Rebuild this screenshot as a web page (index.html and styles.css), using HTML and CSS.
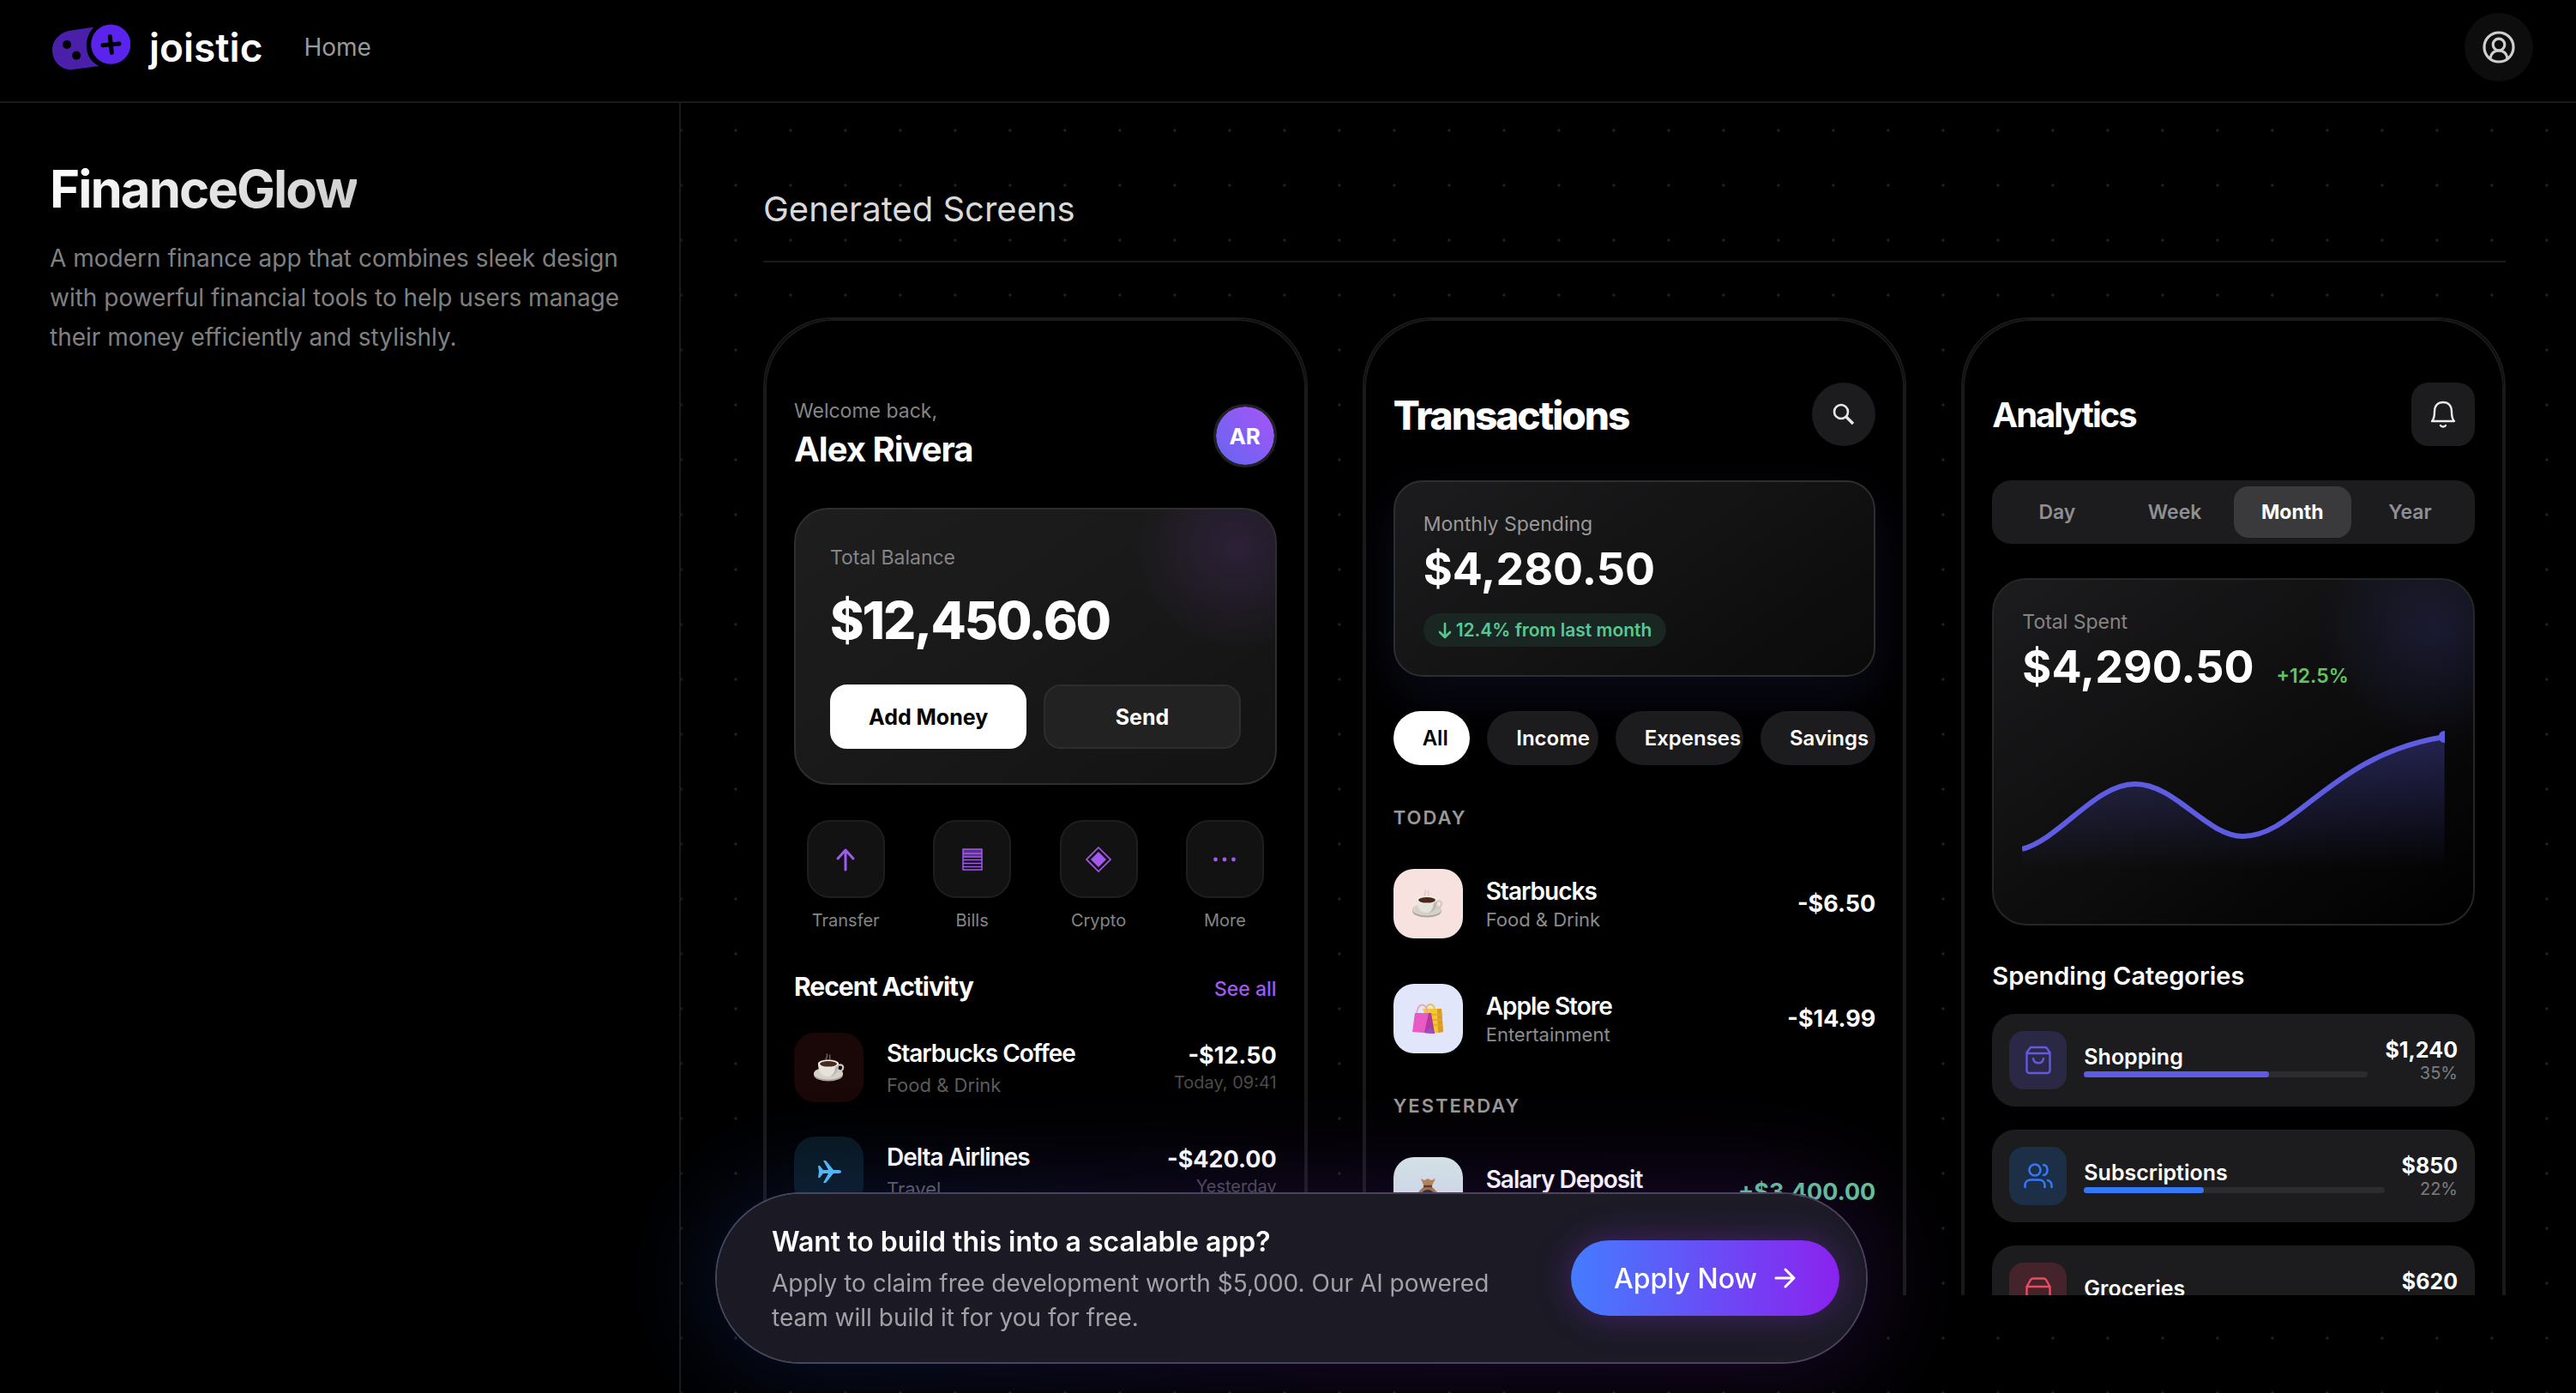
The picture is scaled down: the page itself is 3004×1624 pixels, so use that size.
FILE: index.html
```html
<!DOCTYPE html>
<html lang="en">
<head>
  <meta charset="UTF-8" />
  <meta name="viewport" content="width=device-width, initial-scale=1.0"/>
  <title>FinanceGlow - joistic</title>
  <link rel="stylesheet" href="styles.css">
</head>
<body>
  <svg class="sprite" aria-hidden="true">
    <symbol id="coffee" viewBox="0 0 36 36">
      <path d="M15 9c-3-3 3-4 0-7M18 9c3-3-1-4 1-6" fill="none" stroke="#b9b3b0" stroke-opacity=".5" stroke-width="1.4" stroke-linecap="round"/>
      <ellipse cx="17" cy="26" rx="17" ry="7.5" fill="#a9a59c"/>
      <ellipse cx="17" cy="24.500" rx="17" ry="7" fill="#d5d1c8"/>
      <path d="M28 15c8-3 9 7-1 8" fill="none" stroke="#cfcbc3" stroke-width="2.200"/>
      <path d="M5 13c0 9 4 15 12 15s12-6 12-15z" fill="#e6e3dd"/>
      <path d="M19 28c7-1 10-7 10-14l-4 1c0 6-2 11-6 13z" fill="#bdb9b1"/>
      <ellipse cx="17" cy="13" rx="12" ry="4.500" fill="#f3f1ed"/>
      <ellipse cx="17" cy="13.300" rx="10" ry="3.300" fill="#4a2a1c"/>
    </symbol>
  </svg>
  <header class="topbar">
    <a class="brand" href="#">
      <svg class="logo" viewBox="33 28 272 160" aria-hidden="true">
        <path d="M178 38 98 50C60 56 33 84 33 118c0 42 33 72 71 68l92-12C144 148 138 80 178 38z" fill="#4a20ab"/>
        <circle cx="84" cy="99" r="15" fill="#000"/>
        <circle cx="117" cy="137" r="15" fill="#000"/>
        <circle cx="237" cy="98" r="69" fill="#5b23ee"/>
        <path d="M234 71l6 56M209 101l57-5" stroke="#000" stroke-width="15" stroke-linecap="round"/>
      </svg>
      <span class="brand-name">joistic</span>
    </a>
    <nav><a class="nav-link" href="#">Home</a></nav>
    <button class="profile" type="button" aria-label="Profile">
      <svg viewBox="0 0 38 38" fill="none" stroke="#cfcfcf" stroke-width="3.200">
        <circle cx="19" cy="19" r="17"/>
        <circle cx="19" cy="16" r="6.800"/>
        <path d="M9 32c1-6 5-9 10-9s9 3 10 9"/>
      </svg>
    </button>
  </header>

  <div class="layout">
    <aside class="sidebar">
      <h1>FinanceGlow</h1>
      <p>A modern finance app that combines sleek design with powerful financial tools to help users manage their money efficiently and stylishly.</p>
    </aside>

    <main class="content">
      <h2 class="section-title">Generated Screens</h2>
      <div class="screens">

        <!-- home -->
        <section class="phone">
          <div class="screen screen-home">
            <div class="welcome">
              <div>
                <div class="label">Welcome back,</div>
                <div class="user-name">Alex Rivera</div>
              </div>
              <div class="avatar">AR</div>
            </div>
            <div class="balance-card">
              <div class="label">Total Balance</div>
              <div class="balance">$12,450.60</div>
              <div class="card-buttons">
                <button class="btn btn-light" type="button">Add Money</button>
                <button class="btn btn-dark" type="button">Send</button>
              </div>
            </div>
            <div class="actions">
              <button class="action" type="button">
                <span class="action-icon">
                  <svg width="30" height="30" viewBox="0 0 30 30" fill="none" stroke="#a259ef" stroke-width="3" stroke-linecap="round" stroke-linejoin="round"><path d="M15 27V4M6 14l9-10 9 10"/></svg>
                </span>
                Transfer
              </button>
              <button class="action" type="button">
                <span class="action-icon">
                  <svg width="30" height="30" viewBox="0 0 30 30" fill="none" stroke="#a259ef" stroke-width="1.500"><path d="M4 3h22v9H4z" fill="#5a3384" stroke="none"/><path d="M4 3h22v24H4zM4 8h22M4 12h22M4 15.500h22M4 19.500h22M4 23.500h22"/></svg>
                </span>
                Bills
              </button>
              <button class="action" type="button">
                <span class="action-icon">
                  <svg width="30" height="30" viewBox="0 0 30 30"><path d="M15 1l14 14-14 14L1 15z" fill="none" stroke="#a259ef" stroke-width="1.600"/><path d="M15 6l9 9-9 9-9-9z" fill="#a259ef"/></svg>
                </span>
                Crypto
              </button>
              <button class="action" type="button">
                <span class="action-icon">
                  <svg width="30" height="30" viewBox="0 0 30 30" fill="#a259ef"><circle cx="4.500" cy="15" r="2.400"/><circle cx="15" cy="15" r="2.400"/><circle cx="25.500" cy="15" r="2.400"/></svg>
                </span>
                More
              </button>
            </div>
            <div class="list-head">
              <h3>Recent Activity</h3>
              <a href="#">See all</a>
            </div>
            <ul class="rows">
              <li class="row">
                <span class="row-icon icon-coffee"><svg width="36" height="36"><use href="#coffee"/></svg></span>
                <div class="row-text">
                  <div class="row-title">Starbucks Coffee</div>
                  <div class="row-sub">Food &amp; Drink</div>
                </div>
                <div class="row-side">
                  <div class="amount">-$12.50</div>
                  <div class="time">Today, 09:41</div>
                </div>
              </li>
              <li class="row">
                <span class="row-icon icon-plane">
                  <svg width="28" height="26" viewBox="0 0 28 26" fill="#55bdf5"><path d="M1 6h2l4 5h6L7 0h3l9 11h6c4 0 4 4 0 4h-6l-9 11H7l6-11H7l-4 5H1l1-7z"/></svg>
                </span>
                <div class="row-text">
                  <div class="row-title">Delta Airlines</div>
                  <div class="row-sub">Travel</div>
                </div>
                <div class="row-side">
                  <div class="amount">-$420.00</div>
                  <div class="time">Yesterday</div>
                </div>
              </li>
            </ul>
          </div>
        </section>

        <!-- transactions -->
        <section class="phone">
          <div class="screen screen-transactions">
            <div class="screen-head">
              <h3 class="screen-title">Transactions</h3>
              <button class="icon-btn round" type="button" aria-label="Search">
                <svg width="28" height="28" viewBox="0 0 28 28" fill="none" stroke="#e8e8e8"><circle cx="11" cy="11" r="8" stroke-width="2.600"/><path d="M17 17l8 8" stroke-width="3.400"/></svg>
              </button>
            </div>
            <div class="spending-card">
              <div class="label">Monthly Spending</div>
              <div class="total">$4,280.50</div>
              <div class="badge">
                <svg width="16" height="20" viewBox="0 0 16 20" fill="none" stroke="#58c893" stroke-width="2.600" stroke-linecap="round" stroke-linejoin="round"><path d="M8 2v16M2 12l6 6 6-6"/></svg>
                12.4% from last month
              </div>
            </div>
            <div class="chips">
              <button class="chip active" type="button">All</button>
              <button class="chip" type="button">Income</button>
              <button class="chip" type="button">Expenses</button>
              <button class="chip" type="button">Savings</button>
            </div>
            <h4 class="day">Today</h4>
            <ul class="rows">
              <li class="row">
                <span class="row-icon icon-pink"><svg width="36" height="36"><use href="#coffee"/></svg></span>
                <div class="row-text">
                  <div class="row-title">Starbucks</div>
                  <div class="row-sub">Food &amp; Drink</div>
                </div>
                <div class="amount">-$6.50</div>
              </li>
              <li class="row">
                <span class="row-icon icon-lilac">
                  <svg width="38" height="38" viewBox="0 0 38 38">
                    <path d="M17 8c1-8 9-8 10 0" fill="none" stroke="#e8c33c" stroke-width="1.800"/>
                    <path d="M13 7h22l2 27-12 2z" fill="#f2c732"/>
                    <path d="M30 7h5l2 27-6 1z" fill="#d99a26"/>
                    <path d="M22 14h14M23 20h13M24 26h12" stroke="#e3a72a" stroke-width="1.500"/>
                    <path d="M6 13c1-14 12-14 13 0" fill="none" stroke="#e9a3cf" stroke-width="1.800"/>
                    <path d="M4 12h18l5 24-26-2z" fill="#ea5ac4"/>
                    <path d="M20 12h3l4 24-12-1z" fill="#b23a9c"/>
                    <path d="M22 28l5 8-12-1z" fill="#9050c8"/>
                  </svg>
                </span>
                <div class="row-text">
                  <div class="row-title">Apple Store</div>
                  <div class="row-sub">Entertainment</div>
                </div>
                <div class="amount">-$14.99</div>
              </li>
            </ul>
            <h4 class="day">Yesterday</h4>
            <ul class="rows">
              <li class="row">
                <span class="row-icon icon-mint">
                  <svg width="34" height="36" viewBox="0 0 34 36">
                    <path d="M9 2l4 2 4-2 4 2 5-2-5 10h-8z" fill="#b98c4d"/>
                    <path d="M13 11h8c6 5 11 11 11 17 0 6-6 7-15 7S2 34 2 28c0-6 5-12 11-17z" fill="#a87b40"/>
                    <path d="M12 11h10" stroke="#5c3f1c" stroke-width="2.500"/>
                    <circle cx="17" cy="23" r="8" fill="#2d2b36"/>
                  </svg>
                </span>
                <div class="row-text">
                  <div class="row-title">Salary Deposit</div>
                  <div class="row-sub">Income</div>
                </div>
                <div class="amount positive">+$3,400.00</div>
              </li>
            </ul>
          </div>
        </section>

        <!-- analytics -->
        <section class="phone">
          <div class="screen screen-analytics">
            <div class="screen-head">
              <h3 class="screen-title">Analytics</h3>
              <button class="icon-btn" type="button" aria-label="Notifications">
                <svg width="30" height="34" viewBox="0 0 30 34" fill="none" stroke="#ececec" stroke-width="2.400" stroke-linejoin="round" stroke-linecap="round"><path d="M2 25c3-3 3-7 3-11 0-7 4-11 10-11s10 4 10 11c0 4 0 8 3 11zM12 30c1 2 5 2 6 0"/></svg>
              </button>
            </div>
            <div class="segments">
              <button type="button">Day</button>
              <button type="button">Week</button>
              <button class="active" type="button">Month</button>
              <button type="button">Year</button>
            </div>
            <div class="chart-card">
              <div class="label">Total Spent</div>
              <div class="total-line">
                <span class="total">$4,290.50</span>
                <span class="change">+12.5%</span>
              </div>
              <svg class="chart" viewBox="0 0 493 194" aria-hidden="true">
                <defs>
                  <linearGradient id="area" x1="0" y1="0" x2="0" y2="1">
                    <stop offset="0" stop-color="#5e5ce6" stop-opacity=".32"/>
                    <stop offset="1" stop-color="#5e5ce6" stop-opacity="0"/>
                  </linearGradient>
                </defs>
                <path d="M0 140C45 128 85 64 132 64S215 125 258 125C320 125 360 30 493 9V164H0z" fill="url(#area)"/>
                <path d="M0 140C45 128 85 64 132 64S215 125 258 125C320 125 360 30 493 9" fill="none" stroke="#5e5ce0" stroke-width="6"/>
                <circle cx="493" cy="9" r="7" fill="#5e5ce0"/>
              </svg>
            </div>
            <h4 class="cat-title">Spending Categories</h4>
            <ul class="categories">
              <li class="category">
                <span class="cat-icon violet">
                  <svg width="30" height="34" viewBox="0 0 30 34" fill="none" stroke="#6259e0" stroke-width="2.400" stroke-linecap="round" stroke-linejoin="round"><path d="M1.500 8 6 2h18l4.500 6v21a3 3 0 0 1-3 3h-21a3 3 0 0 1-3-3zM1.500 9h27M9 15c1 7 11 7 12 0"/></svg>
                </span>
                <div class="cat-main">
                  <div class="cat-name">Shopping</div>
                  <div class="bar"><div class="fill violet-fill" style="width: 65%"></div></div>
                </div>
                <div class="cat-side">
                  <div class="cat-amount">$1,240</div>
                  <div class="cat-pct">35%</div>
                </div>
              </li>
              <li class="category">
                <span class="cat-icon blue">
                  <svg width="34" height="32" viewBox="0 0 34 32" fill="none" stroke="#3478f6" stroke-width="2.600" stroke-linecap="round"><circle cx="13" cy="9" r="6.500"/><path d="M1.500 29v-2c0-4 3-6.500 6.500-6.500h10c4 0 6.500 3 6.500 6.500v2M23 3c6 1 6 11 0 12M28 21c3 1 4.500 3 4.500 6v2"/></svg>
                </span>
                <div class="cat-main">
                  <div class="cat-name">Subscriptions</div>
                  <div class="bar"><div class="fill blue-fill" style="width: 40%"></div></div>
                </div>
                <div class="cat-side">
                  <div class="cat-amount">$850</div>
                  <div class="cat-pct">22%</div>
                </div>
              </li>
              <li class="category">
                <span class="cat-icon red">
                  <svg width="30" height="34" viewBox="0 0 30 34" fill="none" stroke="#ef4a62" stroke-width="2.400" stroke-linejoin="round"><path d="M1.500 11 6 3q1-1.500 3-1.500h12q2 0 3 1.500l4.500 8v18a3 3 0 0 1-3 3h-21a3 3 0 0 1-3-3zM1.500 11h27"/></svg>
                </span>
                <div class="cat-main">
                  <div class="cat-name">Groceries</div>
                  <div class="bar"><div class="fill red-fill" style="width: 30%"></div></div>
                </div>
                <div class="cat-side">
                  <div class="cat-amount">$620</div>
                  <div class="cat-pct">18%</div>
                </div>
              </li>
            </ul>
          </div>
        </section>
      </div>
    </main>
  </div>

  <div class="cta">
    <div class="cta-text">
      <h3>Want to build this into a scalable app?</h3>
      <p>Apply to claim free development worth $5,000. Our AI powered team will build it for you for free.</p>
    </div>
    <button class="cta-button" type="button">
      Apply Now
      <svg width="26" height="26" viewBox="0 0 26 26" fill="none" stroke="#fff" stroke-width="3" stroke-linecap="round" stroke-linejoin="round"><path d="M2 13h21M13 3l10 10-10 10"/></svg>
    </button>
  </div>
</body>
</html>
```

FILE: styles.css
```css
* {
  box-sizing: border-box;
  margin: 0;
  padding: 0;
}
body {
  min-height: 100vh;
  display: flex;
  flex-direction: column;
  background-color: #000;
  color: #fff;
  font-family: Inter, "Open Sans", sans-serif;
  font-size: 28px;
}
button {
  border: none;
  background: none;
  color: inherit;
  font: inherit;
  cursor: pointer;
}
a {
  color: inherit;
  text-decoration: none;
}
ul {
  list-style: none;
}
svg {
  display: block;
  flex-shrink: 0;
}
.sprite {
  position: absolute;
  width: 0;
  height: 0;
}

/* top bar */
.topbar {
  display: flex;
  align-items: center;
  height: 120px;
  padding: 0 50px 8px 61px;
  border-bottom: 2px solid #1a1a1a;
}
.brand {
  display: flex;
  align-items: center;
  gap: 22px;
}
.logo {
  width: 91px;
  height: 54px;
}
.brand-name {
  font-size: 46px;
  font-weight: 600;
  line-height: 48px;
}
.nav-link {
  margin-left: 48px;
  color: #999;
}
.profile {
  display: flex;
  align-items: center;
  justify-content: center;
  width: 80px;
  height: 80px;
  margin-left: auto;
  border-radius: 50%;
  background-color: #0d0d0d;
}
.profile svg {
  width: 38px;
  height: 38px;
}

/* page */
.layout {
  flex: 1;
  display: flex;
}
.sidebar {
  width: 794px;
  flex-shrink: 0;
  padding: 64px 58px;
  border-right: 2px solid #1a1a1a;
}
.sidebar h1 {
  width: fit-content;
  font-size: 60px;
  font-weight: 700;
  line-height: 72px;
  letter-spacing: -2px;
  background: linear-gradient(135deg, #fff, #ccc);
  background-clip: text;
  color: transparent;
}
.sidebar p {
  margin-top: 22px;
  line-height: 46px;
  color: #808080;
}
.content {
  flex: 1;
  min-width: 0;
  padding: 96px 82px 96px 96px;
  background-image: radial-gradient(circle, #1a1a1a 2px, transparent 2px);
  background-size: 64px 64px;
  background-position: -32px 0;
}
.section-title {
  padding-bottom: 32px;
  border-bottom: 2px solid #1a1a1a;
  font-size: 40px;
  font-weight: 400;
  line-height: 56px;
  color: #d9d9d9;
}
.screens {
  display: grid;
  grid-template-columns: repeat(3, 1fr);
  gap: 64px;
  margin-top: 64px;
}

/* phones */
.phone {
  height: 1140px;
  overflow: hidden;
  border: 2px solid #1a1a1a;
  border-bottom: none;
  border-radius: 80px 80px 0 0;
  background-color: #000;
}
.screen {
  min-height: 100%;
  padding: 72px 32px 0;
  border: 2px solid #1a1a1a;
  border-bottom: none;
  border-radius: 80px 80px 0 0;
}
.screen-home {
  padding-top: 89px;
}
.label {
  font-size: 23px;
  line-height: 32px;
  color: #858585;
}
.welcome {
  display: flex;
  justify-content: space-between;
  align-items: flex-end;
}
.user-name {
  margin-top: 8px;
  font-size: 40px;
  font-weight: 700;
  line-height: 42px;
  letter-spacing: -1px;
}
.avatar {
  display: flex;
  align-items: center;
  justify-content: center;
  width: 74px;
  height: 74px;
  border: 3px solid #222;
  border-radius: 50%;
  background: linear-gradient(45deg, #6366f1, #a855f7) padding-box;
  font-size: 26px;
  font-weight: 700;
}
.balance-card {
  margin-top: 47px;
  padding: 40px;
  border: 2px solid #2e2e2e;
  border-radius: 40px;
  background: radial-gradient(circle at 92% 14%, rgba(168, 85, 247, .14), transparent 120px), linear-gradient(145deg, #1e1e1e, #131313);
}
.balance {
  margin-top: 21px;
  font-size: 60px;
  font-weight: 800;
  line-height: 72px;
  letter-spacing: -2px;
}
.card-buttons {
  display: flex;
  gap: 20px;
  margin-top: 39px;
}
.btn {
  flex: 1;
  height: 75px;
  border: 2px solid #fff;
  border-radius: 20px;
  font-size: 25px;
  font-weight: 700;
}
.btn-light {
  background-color: #fff;
  color: #000;
}
.btn-dark {
  border-color: #2d2d2d;
  background-color: #222;
}
.actions {
  display: grid;
  grid-template-columns: repeat(4, 1fr);
  gap: 27px;
  margin-top: 41px;
}
.action {
  display: flex;
  flex-direction: column;
  align-items: center;
  gap: 12px;
  font-size: 20px;
  line-height: 28px;
  color: #858585;
}
.action-icon {
  display: flex;
  align-items: center;
  justify-content: center;
  width: 91px;
  height: 91px;
  border: 2px solid #1e1e1e;
  border-radius: 27px;
  background-color: #121212;
}
.list-head {
  display: flex;
  justify-content: space-between;
  align-items: baseline;
  margin: 45px 0 36px;
}
.list-head h3 {
  font-size: 30px;
  font-weight: 700;
  line-height: 36px;
  letter-spacing: -1px;
}
.list-head a {
  font-size: 23px;
  font-weight: 500;
  color: #a259ef;
}
.rows {
  display: flex;
  flex-direction: column;
  gap: 40px;
}
.row {
  display: flex;
  align-items: center;
}
.row-icon {
  display: flex;
  align-items: center;
  justify-content: center;
  width: 81px;
  height: 81px;
  border-radius: 24px;
}
.icon-coffee {
  background-color: #1a0808;
}
.icon-plane {
  background-color: #08181f;
}
.icon-pink {
  background-color: #f8e2e0;
}
.icon-lilac {
  background-color: #e2e6fb;
}
.icon-mint {
  background-color: #d8ebe6;
}
.row-text {
  flex: 1;
  margin-left: 27px;
}
.row-title {
  font-size: 28px;
  font-weight: 600;
  line-height: 34px;
  letter-spacing: -1px;
}
.row-sub {
  margin-top: 6px;
  font-size: 22px;
  line-height: 28px;
  color: #5c5c5c;
}
.row-side {
  text-align: right;
}
.amount {
  font-size: 27px;
  font-weight: 700;
  line-height: 34px;
}
.time {
  font-size: 20px;
  line-height: 28px;
  color: #4c4c4c;
}
.positive {
  color: #62c49a;
}

/* transactions and analytics */
.screen-head {
  display: flex;
  justify-content: space-between;
  align-items: center;
  margin-bottom: 40px;
}
.screen-title {
  padding-top: 2px;
  font-size: 46px;
  font-weight: 800;
  line-height: 56px;
  letter-spacing: -2px;
}
.screen-analytics .screen-title {
  font-size: 40px;
  font-weight: 700;
}
.icon-btn {
  display: flex;
  align-items: center;
  justify-content: center;
  width: 74px;
  height: 74px;
  border-radius: 20px;
  background-color: #1c1c1e;
}
.icon-btn.round {
  border-radius: 50%;
}
.spending-card {
  padding: 33px;
  border: 2px solid #2e2e2e;
  border-radius: 34px;
  background: linear-gradient(145deg, #1c1c1e, #0a0a0a);
  box-shadow: 0 20px 60px rgba(94, 92, 230, .12);
}
.spending-card .label {
  color: #999;
}
.total {
  margin-top: 5px;
  font-size: 52px;
  font-weight: 700;
  line-height: 64px;
}
.badge {
  display: flex;
  align-items: center;
  gap: 5px;
  width: fit-content;
  height: 39px;
  margin-top: 19px;
  padding: 0 17px;
  border-radius: 20px;
  background-color: #192621;
  font-size: 21px;
  font-weight: 600;
  color: #58c893;
}
.chips {
  display: grid;
  grid-template-columns: 90fr 130fr 150fr 135fr;
  gap: 20px;
  margin-top: 40px;
}
.chip {
  height: 63px;
  min-width: 0;
  padding-left: 34px;
  border-radius: 32px;
  background-color: #1c1c1e;
  font-size: 24px;
  font-weight: 600;
  text-align: left;
}
.chip.active {
  background-color: #fff;
  color: #000;
}
.day {
  margin: 47px 0 46px;
  font-size: 22px;
  font-weight: 600;
  line-height: 28px;
  letter-spacing: 2px;
  text-transform: uppercase;
  color: #999;
}
.screen-transactions .rows {
  gap: 53px;
}
.screen-transactions .row-sub {
  margin-top: 2px;
  color: #8c8c8c;
}
.segments {
  display: grid;
  grid-template-columns: repeat(4, 1fr);
  padding: 7px;
  border-radius: 22px;
  background-color: #1c1c1e;
}
.segments button {
  height: 60px;
  border-radius: 17px;
  font-size: 23px;
  font-weight: 600;
  color: #8e8e93;
}
.segments .active {
  background-color: #3a3a3c;
  font-weight: 700;
  color: #fff;
}
.chart-card {
  margin-top: 40px;
  padding: 33px;
  border: 2px solid #262626;
  border-radius: 40px;
  background: radial-gradient(circle at 92% 14%, rgba(94, 92, 230, .16), transparent 135px), linear-gradient(145deg, #1c1c1e, #000);
}
.total-line {
  display: flex;
  align-items: baseline;
  gap: 26px;
}
.change {
  font-size: 23px;
  font-weight: 600;
  color: #5fc85c;
}
.chart {
  width: 100%;
  margin-top: 40px;
}
.cat-title {
  margin: 41px 0 26px;
  font-size: 29px;
  font-weight: 600;
  line-height: 36px;
}
.categories {
  display: flex;
  flex-direction: column;
  gap: 27px;
}
.category {
  display: flex;
  align-items: center;
  gap: 20px;
  padding: 20px;
  border-radius: 27px;
  background-color: #1c1c1e;
}
.cat-icon {
  display: flex;
  align-items: center;
  justify-content: center;
  width: 67px;
  height: 68px;
  border-radius: 17px;
}
.violet {
  background-color: #2b2846;
}
.blue {
  background-color: #1d2e47;
}
.red {
  background-color: #45232b;
}
.cat-main {
  flex: 1;
}
.cat-name {
  font-size: 25px;
  font-weight: 600;
  line-height: 34px;
}
.bar {
  height: 7px;
  border-radius: 4px;
  background-color: #2c2c2e;
}
.fill {
  height: 7px;
  border-radius: 4px;
}
.violet-fill {
  background-color: #5e5ce6;
}
.blue-fill {
  background-color: #3478f6;
}
.red-fill {
  background-color: #ef4a62;
}
.cat-side {
  text-align: right;
}
.cat-amount {
  font-size: 25px;
  font-weight: 700;
  line-height: 30px;
}
.cat-pct {
  font-size: 20px;
  line-height: 24px;
  color: #7c7c80;
}

/* floating offer */
.cta {
  position: fixed;
  bottom: 34px;
  left: 50%;
  transform: translateX(-50%);
  isolation: isolate;
  display: flex;
  align-items: center;
  gap: 64px;
  width: 1344px;
  max-width: 90vw;
  height: 200px;
  margin-left: 4px;
  padding: 0 31px 0 64px;
  border: 2px solid #46444f;
  border-radius: 100px;
}
.cta::before {
  content: "";
  position: absolute;
  z-index: -2;
  inset: -8px;
  border-radius: 100px;
  background: linear-gradient(90deg, #2563eb, #7c3aed, #9333ea);
  filter: blur(60px);
  opacity: .2;
}
.cta::after {
  content: "";
  position: absolute;
  z-index: -1;
  inset: 0;
  border-radius: 100px;
  background: linear-gradient(90deg, #1a1924, #1c1b26);
}
.cta-text {
  flex: 1;
  padding-top: 4px;
}
.cta-text h3 {
  margin-bottom: 8px;
  font-size: 32px;
  font-weight: 600;
  line-height: 40px;
}
.cta-text p {
  line-height: 40px;
  color: #a1a1a6;
}
.cta-button {
  display: flex;
  align-items: center;
  gap: 20px;
  height: 88px;
  padding: 0 50px;
  border-radius: 44px;
  background: linear-gradient(90deg, #447cff, #8b22ee);
  box-shadow: 0 0 40px rgba(147, 51, 234, .35);
  font-size: 32px;
  font-weight: 500;
}
```
